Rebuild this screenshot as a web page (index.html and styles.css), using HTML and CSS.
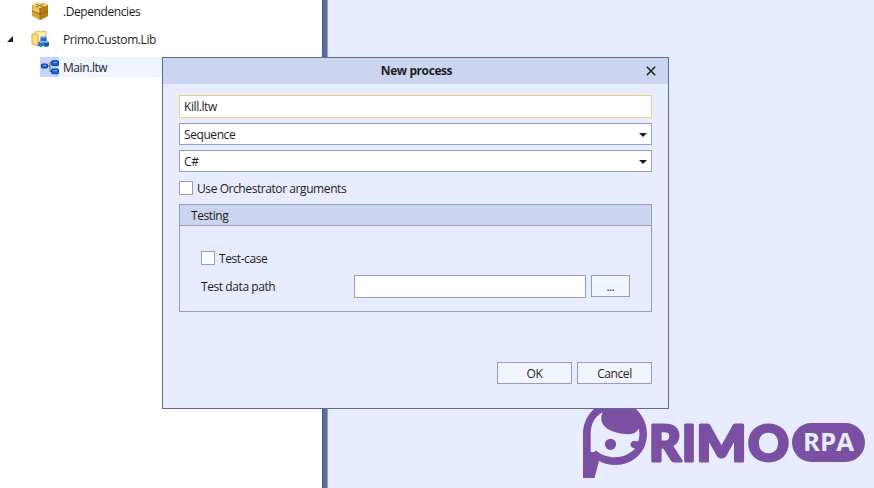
FILE: index.html
```html
<!DOCTYPE html>
<html lang="en">
<head>
<meta charset="utf-8">
<title>New process</title>
<link rel="stylesheet" href="styles.css">
</head>
<body>
<div class="workspace">
  <aside class="tree">
    <div class="row root">
      <svg class="icon" width="18" height="20" viewBox="0 0 18 20"><path d="M1 4L6 1.500L9 2.500L13 1.500L17 4V15L9 19L1 15Z" fill="#d9a437"/><path d="M1 4L6 1.500L9 2.500L13 1.500L17 4L9 7Z" fill="#f4d880"/><path d="M9 7L17 4V15L9 19Z" fill="#b97d17"/><path d="M2 5L8 7V12L2 10Z" fill="#ecc35d"/><path d="M1 10L9 13L17 10M9 7V19M5 3L12 6M13 3L5 6" fill="none" stroke="#8b6219" stroke-width=".8"/></svg>
      <span class="label">.Dependencies</span>
    </div>
    <div class="row root">
      <svg class="arrow" width="6" height="6" viewBox="0 0 6 6"><path d="M6 0V6H0Z" fill="#1e1e1e"/></svg>
      <svg class="icon" width="18" height="18" viewBox="0 0 18 18"><path d="M4 2L8 1L10 2L15 1V14H4Z" fill="#fff0b8" stroke="#dfb85b"/><path d="M1 4H6L7 5V16L1 14Z" fill="#ffdf83" stroke="#dba63e"/><path d="M9.500 7L12.500 6L15.500 7V11H9.500Z" fill="#2368c6"/><path d="M9.500 7L12.500 6L15.500 7L12.500 8Z" fill="#8bc5ff"/><path d="M7 12L10 11L12.500 12V16L10 17L7 16Z" fill="#2875d4"/><path d="M12.500 12L15 11L18 12V16L15 17L12.500 16Z" fill="#1656ad"/><path d="M7 12L10 11L12.500 12L10 13ZM12.500 12L15 11L18 12L15 13Z" fill="#83bcfa"/></svg>
      <span class="label">Primo.Custom.Lib</span>
    </div>
    <div class="row selected">
      <span class="iconbox"><svg width="18" height="15" viewBox="0 0 18 15"><path d="M7 6H9M11 2.500H9V11.500H11" fill="none" stroke="#58606c"/><g fill="#1c62c8" stroke="#123f91"><rect x=".5" y="4" width="6" height="4" rx="1"/><rect x="10.500" y=".8" width="7" height="4.700" rx="1"/><rect x="10.500" y="9" width="7" height="4.700" rx="1"/></g><path d="M2 5.500H5.500M12 2.500H16M12 10.700H16" stroke="#62b0ff"/></svg></span>
      <span class="label">Main.ltw</span>
    </div>
  </aside>
  <div class="splitter"></div>
  <main class="canvas"></main>
</div>

<svg class="logo" width="290" height="84" viewBox="580 400 290 84">
  <path d="M583 478V434C583 416 597 401 615 401C633 401 647 416 647 434C647 452 633 465 615 465C609 465 604 463.500 599 461L594.500 478Z" fill="#7b50a2"/>
  <path d="M602.500 412.500C595 416 590.700 424 590.700 434V452H594L596 450.500C601 455 608 457.300 615 457.300C624 457.300 631 453 635 448.500C629.500 448 629 441.500 634 440.800L638 441.500C640 437 639.500 432 638.700 428.500C636 434 631 434.500 625 434C611 433 597 426 602.500 412.500Z" fill="#e7edfe"/>
  <circle cx="610.500" cy="444.300" r="5.600" fill="#7b50a2"/>
  <g class="wordmark">
    <text x="649" y="460.500" textLength="32" lengthAdjust="spacingAndGlyphs">R</text>
    <text x="682" y="460.500" textLength="14" lengthAdjust="spacingAndGlyphs">I</text>
    <text x="696.500" y="460.500" textLength="50" lengthAdjust="spacingAndGlyphs">M</text>
    <text x="748" y="460.500" textLength="41" lengthAdjust="spacingAndGlyphs">O</text>
  </g>
  <rect x="792" y="423" width="73" height="39" rx="19.500" fill="#7b50a2"/>
  <text class="tag" x="803" y="451" textLength="51" lengthAdjust="spacingAndGlyphs">RPA</text>
</svg>

<section class="dialog">
  <header class="titlebar"><span>New process</span><svg class="close" width="10" height="10" viewBox="0 0 10 10"><path d="M.8 .8L9.200 9.200M9.200 .8L.8 9.200" stroke="#1e1e1e" stroke-width="1.500"/></svg></header>
  <div class="content">
    <div class="field name"><span>Kill.ltw</span></div>
    <div class="field combo"><span>Sequence</span><svg width="8" height="4"><path d="M0 0H8L4 4Z" fill="#1e1e1e"/></svg></div>
    <div class="field combo"><span>C#</span><svg width="8" height="4"><path d="M0 0H8L4 4Z" fill="#1e1e1e"/></svg></div>
    <div class="check"><i class="box"></i><span>Use Orchestrator arguments</span></div>
    <div class="group">
      <div class="group-head"><span>Testing</span></div>
      <div class="check case"><i class="box"></i><span>Test-case</span></div>
      <div class="path-row"><span class="path-label">Test data path</span><div class="path-input"></div><div class="button browse"><span>...</span></div></div>
    </div>
    <div class="actions"><div class="button"><span>OK</span></div><div class="button"><span>Cancel</span></div></div>
  </div>
</section>
</body>
</html>
```
FILE: styles.css
```css
* { box-sizing: border-box; }
body { margin: 0; width: 874px; height: 488px; overflow: hidden; font: 12px/16px "Open Sans", "Noto Sans", sans-serif; letter-spacing: -0.42px; color: #1e1e1e; }
svg { display: block; flex: none; }
span { white-space: nowrap; }
.workspace { display: flex; height: 488px; }
.tree { width: 322px; background: #fff; padding-top: 1px; }
.row { display: flex; align-items: center; position: relative; }
.root { height: 20px; padding-left: 31px; margin-bottom: 8px; }
.arrow { position: absolute; left: 7px; top: 7px; }
.icon { width: 18px; margin-right: 14px; }
.label, .check span, .button span { padding-top: 2px; }
.selected { height: 20px; margin-left: 40px; background: #eff4ff; }
.iconbox { width: 19px; height: 20px; background: #c4d5ff; display: flex; align-items: center; justify-content: center; margin-right: 4px; }
.splitter { width: 6px; background: #5d6b99; border-left: 1px solid #415a8f; border-right: 1px solid #929fc3; }
.canvas { flex: 1; background: #e7edfe; }
.logo { position: absolute; left: 580px; top: 400px; }
.wordmark { font: 900 50px Lato, sans-serif; letter-spacing: 0; fill: #7b50a2; stroke: #7b50a2; stroke-width: 3; stroke-linejoin: round; }
.tag { font: 700 25px "Open Sans", sans-serif; letter-spacing: 0; fill: #e7edfe; }
.dialog { position: absolute; left: 162px; top: 57px; width: 507px; height: 352px; background: #e7edfe; border: 1px solid #5b6a99; }
.titlebar { height: 26px; background: #cbd5ef; display: flex; align-items: center; justify-content: center; position: relative; font-weight: 700; padding-left: 2px; }
.close { position: absolute; right: 12px; top: 8px; }
.content { padding: 11px 16px 0; }
.field { height: 22px; background: #fff; border: 1px solid #929dc0; padding: 0 4px; display: flex; align-items: center; justify-content: space-between; margin-bottom: 5px; }
.combo span { padding-top: 2px; }
.combo svg { margin-top: 1px; }
.field.name { height: 23px; border-color: #f5cc84; }
.check { display: flex; align-items: center; height: 16px; gap: 4px; }
.content > .check { margin-top: 8px; }
.box { width: 14px; height: 14px; background: #fff; border: 1px solid #929dc0; }
.group { height: 108px; border: 1px solid #929dc0; margin-top: 8px; }
.group-head { height: 21px; background: #cbd5ef; border-bottom: 1px solid #929dc0; padding: 3px 11px 0; }
.case { margin: 24px 0 0 21px; }
.path-row { display: flex; margin: 9px 0 0 21px; }
.path-label { width: 153px; padding-top: 4px; }
.path-input { width: 232px; height: 23px; background: #fff; border: 1px solid #929dc0; margin-right: 5px; }
.button { width: 75px; height: 22px; background: #f1f5fd; border: 1px solid #929dc0; display: flex; align-items: center; justify-content: center; }
.button.browse { width: 39px; }
.actions { display: flex; justify-content: flex-end; gap: 5px; margin-top: 50px; }
```
